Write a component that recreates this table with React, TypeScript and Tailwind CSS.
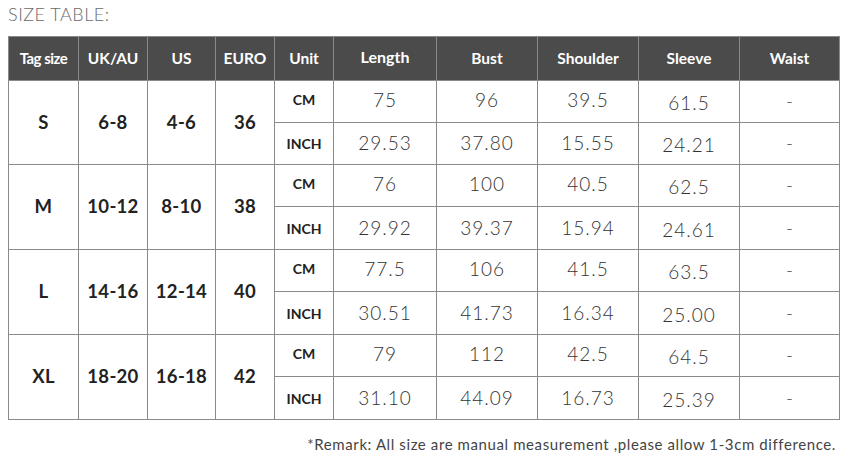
import React from "react";

const rows = [
  { tag: "S", uk: "6-8", us: "4-6", euro: "36", cm: ["75", "96", "39.5", "61.5"], inch: ["29.53", "37.80", "15.55", "24.21"] },
  { tag: "M", uk: "10-12", us: "8-10", euro: "38", cm: ["76", "100", "40.5", "62.5"], inch: ["29.92", "39.37", "15.94", "24.61"] },
  { tag: "L", uk: "14-16", us: "12-14", euro: "40", cm: ["77.5", "106", "41.5", "63.5"], inch: ["30.51", "41.73", "16.34", "25.00"] },
  { tag: "XL", uk: "18-20", us: "16-18", euro: "42", cm: ["79", "112", "42.5", "64.5"], inch: ["31.10", "44.09", "16.73", "25.39"] },
];

const headers = ["Tag size", "UK/AU", "US", "EURO", "Unit", "Length", "Bust", "Shoulder", "Sleeve", "Waist"];

export default function App() {
  return (
    <div className="w-[844px] h-[457px] bg-white overflow-hidden font-['Lato','Noto_Sans',sans-serif]">
      <div className="pl-[8px] pt-[4px] h-[36px] text-[18px] leading-[20px] text-[#6b6b6b] font-light tracking-[0.5px]">
        SIZE TABLE:
      </div>
      <div className="ml-[8px] w-[832px] grid gap-px bg-[#8a8a8a] border border-[#8a8a8a] grid-cols-[69px_68px_67px_58px_58px_102px_100px_100px_100px_99px] grid-rows-[43px_41px_41px_41px_42px_41px_42px_41px_42px]">
        {headers.map((h, i) => (
          <div
            key={h}
            className={`bg-[#4b4b4b] text-white font-bold flex items-center justify-center ${i === 0 ? "text-[15px] tracking-[-0.5px]" : "text-[15.5px]"} ${i === 5 ? "pb-[4px] text-[16px]" : ""}`}
          >
            {h}
          </div>
        ))}
        {rows.map((r) => (
          <React.Fragment key={r.tag}>
            {[r.tag, r.uk, r.us, r.euro].map((v, ci) => (
              <div
                key={ci}
                className="bg-white row-span-2 flex items-center justify-center text-[18.5px] font-bold text-[#222] tracking-[0.3px]"
              >
                {v}
              </div>
            ))}
            <div className="bg-white flex items-center justify-center text-[14px] font-bold text-[#222] pb-[4px]">
              CM
            </div>
            {r.cm.map((v, ci) => (
              <div
                key={"c" + ci}
                className={`bg-white flex items-center justify-center text-[19px] tracking-[1px] text-[#333] font-light ${ci === 3 ? "pt-[4px]" : "pb-[2px]"}`}
              >
                {v}
              </div>
            ))}
            <div className="bg-white flex items-center justify-center text-[19px] text-[#555] font-light">
              -
            </div>
            <div className="bg-white flex items-center justify-center text-[14px] font-bold text-[#222]">
              INCH
            </div>
            {r.inch.map((v, ci) => (
              <div
                key={"i" + ci}
                className={`bg-white flex items-center justify-center text-[19px] tracking-[1px] text-[#333] font-light ${ci === 3 ? "pt-[4px]" : ""}`}
              >
                {v}
              </div>
            ))}
            <div className="bg-white flex items-center justify-center text-[19px] text-[#555] font-light">
              -
            </div>
          </React.Fragment>
        ))}
      </div>
      <div className="pr-[8px] pt-[13px] text-right text-[15px] text-[#444] tracking-[0.6px]">
        *Remark: All size are manual measurement ,please allow 1-3cm difference.
      </div>
    </div>
  );
}
